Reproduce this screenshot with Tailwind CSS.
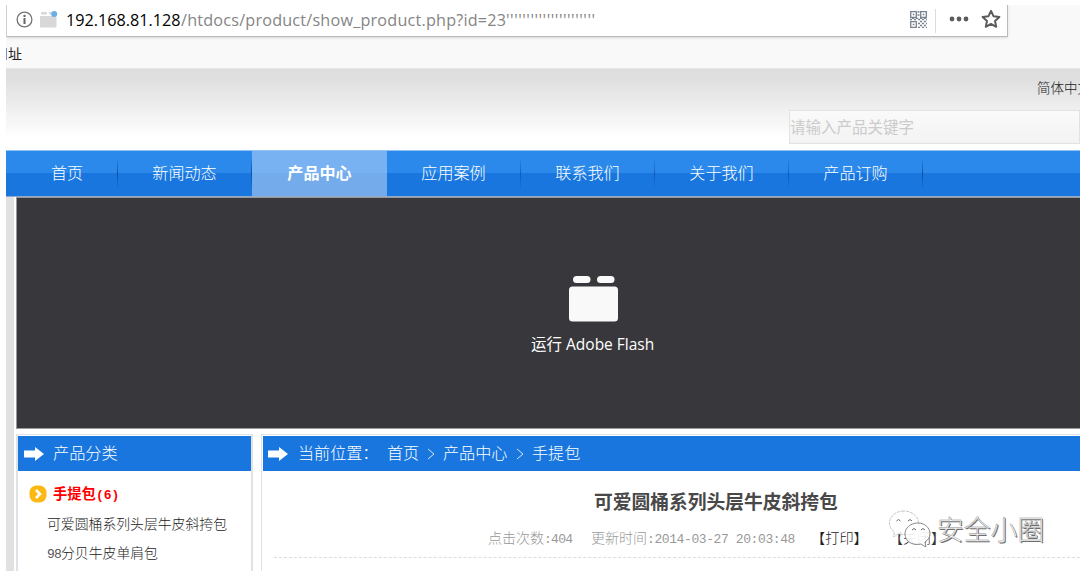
<!DOCTYPE html>
<html lang="zh-CN">
<head>
<meta charset="utf-8">
<title>产品中心</title>
<script src="https://cdn.jsdelivr.net/npm/@tailwindcss/browser@4"></script>
</head>
<body class="h-[579px] w-[1080px] overflow-hidden bg-white pl-1.5 pt-[5px] font-['Liberation_Sans','Noto_Sans_CJK_SC',sans-serif] whitespace-nowrap">
<div class="flex h-[566px] flex-col overflow-hidden">
  <!-- Browser address bar -->
  <div class="h-[63px] shrink-0 bg-[#f9f9f9]">
    <div class="flex h-8 w-[1002px] items-center border-r border-b border-l border-[#b9b9b9] border-l-[#d0d0d0] bg-white pl-[9px] shadow-sm">
      <svg class="-mt-0.5 size-[17px]" viewBox="0 0 17 17"><circle cx="8.5" cy="8.5" r="7.4" fill="none" stroke="#737373" stroke-width="1.3"/><rect x="7.5" y="7" width="2" height="6" fill="#666"/><circle cx="8.5" cy="4.9" r="1.2" fill="#666"/></svg>
      <svg class="-mt-1 ml-[7px] size-[18px]" viewBox="0 0 18 18"><rect x="1" y="2" width="6" height="2.4" rx="1" fill="#d8d8d8"/><rect x="9" y="2" width="5" height="2.4" rx="1" fill="#d8d8d8"/><rect x="0" y="6" width="16.5" height="11.5" rx="1" fill="#d8d8d8"/><circle cx="14.2" cy="4" r="3" fill="#6aaee6"/></svg>
      <div class="-mt-0.5 ml-[8px] flex font-['Open_Sans',sans-serif] text-[16.2px] leading-[30px]"><span class="w-[115px] text-black">192.168.81.128</span><span class="w-[325px] tracking-[0.2px] text-[#858585]">/htdocs/product/show_product.php?id=23</span><span class="tracking-[0.52px] text-[#858585]">''''''''''''''''''''''</span></div>
      <svg class="-mt-0.5 mr-[8px] ml-auto size-[17px]" viewBox="0 0 17 17" fill="none" stroke="#778290" stroke-width="1.3"><path d="M.7.7h5.6v5.6H.7zM10.7.7h5.6v5.6h-5.6zM.7 10.7h5.6v5.6H.7z"/><path d="M2.7 3.500h1.600M12.700 3.500h1.600M2.700 13.500h1.600M7.500 1h2M7.500 4h2" stroke-width="1.7"/><path d="M0 8.500h17M8 12.500h9M8 16.300h9" stroke-dasharray="2 2"/><path d="M2 7.300h14M10 10.500h7M10 14.500h7" stroke-dasharray="2 2"/></svg>
      <div class="h-6 w-px bg-[#dcdcdc]"></div>
      <svg class="-mt-1 ml-[13px] h-[6px] w-5" viewBox="0 0 20 6" fill="#5c5c5c"><circle cx="3" cy="3" r="2.4"/><circle cx="10" cy="3" r="2.4"/><circle cx="17" cy="3" r="2.4"/></svg>
      <svg class="-mt-1 mr-[6px] ml-[12px] size-[20px]" viewBox="0 0 20 20"><path d="M10 1.8l2.5 5.4 5.9.7-4.4 4 1.2 5.9L10 14.900l-5.200 2.900L6 11.900l-4.400-4 5.900-.7z" fill="none" stroke="#5c5c5c" stroke-width="2" stroke-linejoin="round"/></svg>
    </div>
    <div class="flex h-[31px] items-center overflow-hidden pt-[3px] text-[14px] text-[#222]"><div class="mr-px h-3 w-px bg-[#7891ba]"></div><span>址</span></div>
  </div>

  <!-- Site header -->
  <header class="h-[82px] shrink-0 border-t border-[#e6e6e6] bg-linear-to-b from-[#dedede] from-10% to-white to-85%">
    <div class="flex h-[41px] justify-end overflow-hidden"><span class="w-[43px] text-[13.5px] leading-[40px] font-light text-[#222]">简体中文</span></div>
    <div class="ml-[783px] h-[34px] border border-[#e2e2e2] bg-linear-to-b from-[#fafafa] to-[#f3f3f3] text-[15.5px] leading-[34px] text-[#cbcbcb]">请输入产品关键字</div>
  </header>

  <!-- Main navigation -->
  <nav class="flex h-[47px] shrink-0 border-t border-b border-t-[#8fc4f4] border-b-[#91a9cb] bg-linear-to-b from-[#2a89eb] from-50% to-[#1876de] to-50% text-center font-light text-[16.1px] leading-[45px] text-white">
    <a class="w-[111px] pl-[11px]">首页</a>
    <div class="my-1.5 w-px bg-linear-to-b from-transparent via-[#0c51a5] to-transparent"></div>
    <a class="w-[133px]">新闻动态</a>
    <div class="my-1.5 w-px bg-linear-to-b from-transparent via-[#0c51a5] to-transparent"></div>
    <a class="w-[135px] bg-linear-to-b from-[#79b2f2] from-50% to-[#73abeb] to-50% font-bold">产品中心</a>
    <a class="w-[133px]">应用案例</a>
    <div class="my-1.5 w-px bg-linear-to-b from-transparent via-[#0c51a5]/70 to-transparent"></div>
    <a class="w-[133px]">联系我们</a>
    <div class="my-1.5 w-px bg-linear-to-b from-transparent via-[#0c51a5]/70 to-transparent"></div>
    <a class="w-[133px]">关于我们</a>
    <div class="my-1.5 w-px bg-linear-to-b from-transparent via-[#0c51a5]/70 to-transparent"></div>
    <a class="w-[133px]">产品订购</a>
    <div class="my-1.5 w-px bg-linear-to-b from-transparent via-[#0c51a5] to-transparent"></div>
  </nav>

  <div class="flex min-h-0 flex-1">
    <div class="w-2 shrink-0 bg-[#e1e1e1]"></div>
    <div class="ml-[2px] flex min-w-0 flex-1 flex-col">
      <!-- Flash placeholder -->
      <div class="flex h-[232px] shrink-0 flex-col border-y border-l border-[#999] bg-[#38373c] pt-[77px]">
        <svg class="ml-[551px] h-[47px] w-[51px]" viewBox="0 0 51 47" fill="#f9f9fa"><rect x="5" y="1" width="17.5" height="7" rx="3.5"/><rect x="29" y="1" width="17.5" height="7" rx="3.5"/><rect x="1" y="11.5" width="49" height="35" rx="3.5"/></svg>
        <div class="mt-[10px] ml-[514px] font-['Open_Sans','Noto_Sans_CJK_SC',sans-serif] text-[15.5px] leading-6 text-white">运行 Adobe Flash</div>
      </div>

      <div class="mt-[5px] flex min-h-0 flex-1">
        <!-- Product categories -->
        <aside class="mr-2 w-[237px] shrink-0 border-t border-r-2 border-l-2 border-[#dfe3e7] pt-px">
          <h2 class="flex h-[35px] items-center bg-[#1876de] pl-[6px] text-[16.2px] font-light text-white">
            <svg class="mr-[9px] h-[14px] w-5" viewBox="0 0 20 14"><path d="M0 3.5h11V0l9 7-9 7v-3.5H0z" fill="#fff"/></svg>产品分类
          </h2>
          <div class="flex h-[45px] items-center pl-[11px] text-[14.3px] font-bold text-[#f00]">
            <svg class="mr-[6px] size-[18px]" viewBox="0 0 18 18"><rect x=".5" y=".5" width="17" height="17" rx="7" fill="#fdb813"/><path d="M7 5l4 4-4 4" fill="none" stroke="#fff" stroke-width="2.6"/></svg>
            <span class="pt-0.5">手提包<span class="font-['Liberation_Mono',monospace] text-[13px]">(6)</span></span>
          </div>
          <ul class="pl-[29px] text-[13.85px] leading-[29px] font-light text-[#222]">
            <li class="-mt-[6px] h-[29px]">可爱圆桶系列头层牛皮斜挎包</li>
            <li class="h-[29px]"><span class="font-['Liberation_Mono',monospace] text-[13px] tracking-[-0.8px] text-[#555]">98</span>分贝牛皮单肩包</li>
          </ul>
        </aside>

        <!-- Product detail -->
        <main class="relative min-w-0 flex-1 border-t border-l border-[#dfe3e7] pt-px pl-px">
          <div class="flex h-[35px] items-center bg-[#1876de] pl-[5px] text-[16.1px] font-light text-white">
            <svg class="mr-[10px] h-[14px] w-5" viewBox="0 0 20 14"><path d="M0 3.5h11V0l9 7-9 7v-3.5H0z" fill="#fff"/></svg>
            <span class="w-[89px]">当前位置：</span><span class="w-8">首页</span>
            <svg class="mx-[8px] h-3 w-2" viewBox="0 0 8 12"><path d="M1 1l6 5-6 5" fill="none" stroke="#d5e6fa"/></svg>
            <span class="w-[65px]">产品中心</span>
            <svg class="mx-[8px] h-3 w-2" viewBox="0 0 8 12"><path d="M1 1l6 5-6 5" fill="none" stroke="#d5e6fa"/></svg>
            <span>手提包</span>
          </div>
          <h1 class="mt-[16px] ml-[331px] text-[18.75px] leading-8 font-bold text-[#484848]">可爱圆桶系列头层牛皮斜挎包</h1>
          <div class="mt-[3px] ml-[11px] flex h-[36px] border-b border-dashed border-[#ddd] pl-[214px] text-[14px] leading-[32px] font-light text-[#999]">
            <span class="w-[103px]">点击次数<span class="font-['Liberation_Mono',monospace] text-[13px] tracking-[-0.7px]">:404</span></span>
            <span class="w-[220px]">更新时间<span class="font-['Liberation_Mono',monospace] text-[13px] tracking-[-0.4px]">:2014-03-27 20:03:48</span></span>
            <span class="w-[78px] text-[14.2px] text-[#222]">【打印】</span>
            <span class="text-[#333]">【关闭】</span>
          </div>
          <!-- Channel watermark -->
          <div class="absolute top-[76px] left-[626px] flex items-center">
            <svg class="-mt-1 h-[40px] w-[45px]" viewBox="0 0 45 40" fill="#fff" fill-opacity=".9" stroke="#c4c4c4" stroke-width="1"><path d="M16 2C7.500 2 1.500 7.500 1.500 14c0 4 2 7 5 9l-1 5 5-3c10 2 20-2 20-11C30.500 7.500 24 2 16 2z" stroke-dasharray="3 1"/><path d="M30 14c-7.500 0-13 5-13 11 0 7 7 12 16 10l5 3-1-5c3-2 5-5 5-8 0-6-5-11-12-11z" stroke="#888"/><g fill="none" stroke="#666"><path d="M8.500 12q2-3 4 0M20 12q2-3 4 0M24 21q2-3 4 0M33 21q2-3 4 0"/></g></svg>
            <span class="ml-[4px] text-[26.800px] leading-10 font-light text-white [-webkit-text-stroke:0.4px_#888] [text-shadow:1px_1px_0_#666]">安全小圈</span>
          </div>
        </main>
      </div>
    </div>
  </div>
</div>
</body>
</html>
